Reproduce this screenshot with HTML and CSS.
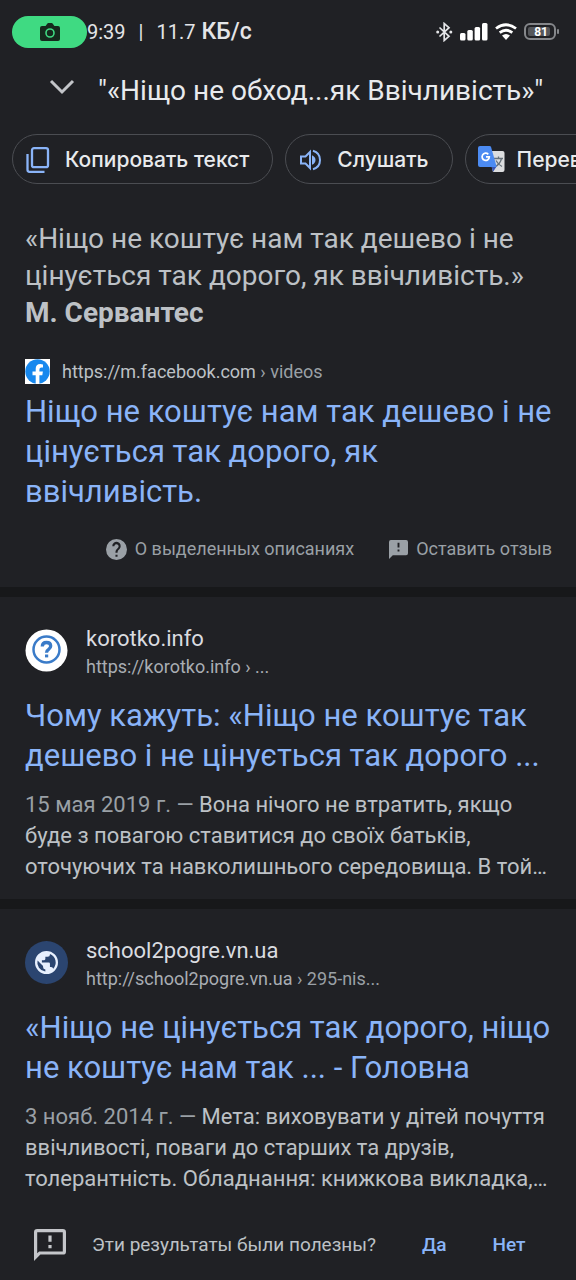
FILE: index.html
```html
<!DOCTYPE html>
<html lang="uk">
<head>
<meta charset="utf-8">
<meta name="viewport" content="width=device-width, initial-scale=1">
<title>Ніщо не обходиться так дешево, як ввічливість</title>
<link rel="stylesheet" href="styles.css">
</head>
<body>
<div class="status">
  <span class="camera-pill">
    <svg width="20" height="18" viewBox="0 0 20 18"><path fill="#16291d" d="M2 3h3.600l1.600-2.300Q7.600 0 8.400 0h3.200q.8 0 1.200.7L14.400 3H18q2 0 2 2v11q0 2-2 2H2q-2 0-2-2V5q0-2 2-2z"/><circle cx="10" cy="10" r="4" fill="none" stroke="#3fda82" stroke-width="1.600"/></svg>
  </span>
  <span class="clock">9:39</span><span class="clock-bar">|</span><span class="clock">11.7</span><span class="unit">КБ/с</span>
  <span class="status-icons">
    <svg width="17" height="20" viewBox="0 0 17 20"><path d="M3.500 5.500l9.500 8.800-4.800 4.200V1.500L13 5.700l-9.500 8.800" fill="none" stroke="#e4e5e8" stroke-width="1.700"/><circle cx="1.700" cy="10" r="1.500" fill="#e4e5e8"/><circle cx="14.800" cy="10" r="1.500" fill="#e4e5e8"/></svg>
    <svg width="28" height="18" viewBox="0 0 28 18" fill="#fff"><rect x="0" y="10" width="5.500" height="7.500" rx="1.500"/><rect x="7.300" y="7" width="5.500" height="10.500" rx="1.500"/><rect x="14.600" y="4" width="5.500" height="13.500" rx="1.500"/><rect x="22" y="0" width="5.500" height="17.500" rx="1.500"/></svg>
    <svg width="22" height="17" viewBox="0 0 22 17" fill="none" stroke="#fff" stroke-width="2.800"><path d="M1 5.500q10-7.600 20 0"/><path d="M4.700 9.600q6.300-4.800 12.600 0"/><path fill="#fff" stroke="none" d="M7 12.600q4-3 8 0L11 17z"/></svg>
    <span class="battery"><span class="battery-level">81</span></span>
  </span>
</div>

<header class="topbar">
  <button class="collapse" aria-label="Згорнути"><svg width="26" height="16" viewBox="0 0 26 16"><path d="M2 2l11 11L24 2" fill="none" stroke="#c3c5c9" stroke-width="3"/></svg></button>
  <h1 class="topbar-title">"«Ніщо не обход...як Ввічливість»"</h1>
</header>

<nav class="chips">
  <button class="chip"><svg width="27" height="26" viewBox="0 0 27 26" fill="none" stroke="#8ab4f8" stroke-width="2.300"><rect x="6" y="1.200" width="16" height="19" rx="2"/><path d="M1.500 7v15.800q0 2 2 2h15"/></svg>Копировать текст</button>
  <button class="chip"><svg width="27" height="22" viewBox="0 0 27 22"><path d="M3 7.500h4.500L12 3v16l-4.500-4.500H3z" fill="none" stroke="#8ab4f8" stroke-width="2"/><path d="M14 6.200q3.500 1.600 3.500 4.800t-3.500 4.800z" fill="#8ab4f8"/><path d="M15 1.800q7 2 7 9.200t-7 9.200" fill="none" stroke="#8ab4f8" stroke-width="2"/></svg>Слушать</button>
  <button class="chip"><svg width="27" height="27" viewBox="0 0 27 27"><path d="M10 5h14.500q2 0 2 2v17q0 2-2 2H15z" fill="#dcdddf"/><path d="M16 12.500h9M20.500 10.500v2M23.500 12.500q-1 5-6.500 8.500M18 14.500q2 4 6 6" fill="none" stroke="#66717a" stroke-width="1.300"/><path d="M13.500 20.500h5L15 26z" fill="#3a57b4"/><path d="M2 0h9.500q1.300 0 1.700 1.400L18.700 21H2q-2 0-2-2V2q0-2 2-2z" fill="#4c8bf2"/><path d="M10.300 8.300A3.600 3.600 0 1 0 11.300 10.900H8" fill="none" stroke="#fff" stroke-width="1.700"/></svg>Перевести</button>
</nav>

<main>
  <section class="featured">
    <p class="quote">«Ніщо не коштує нам так дешево і не цінується так дорого, як ввічливість.» <b class="author">М. Сервантес</b></p>
    <div class="source">
      <svg width="25" height="25" viewBox="0 0 25 25"><path fill="#fff" d="M0 0h25v25H0z"/><circle cx="12.500" cy="12.500" r="12.200" fill="#1788ee"/><path fill="#fff" d="M10.700 25v-8.800H7.500v-3.600h3.200V9.800q0-4.700 4.600-4.700 1.300 0 2.700.3v3h-1.600q-2 0-2 2v2.200h3.500l-.6 3.600h-2.900V25z"/></svg>
      <span class="url">https://m.facebook.com <span class="path">› videos</span></span>
    </div>
    <h2 class="title"><a href="#facebook">Ніщо не коштує нам так дешево і не цінується так дорого, як ввічливість.</a></h2>
    <div class="about">
      <a href="#about"><svg width="21" height="21" viewBox="2 2 20 20" fill="#9aa0a6"><path d="M12 2a10 10 0 1 0 0 20 10 10 0 0 0 0-20zm1 17h-2v-2h2v2zm2.070-7.750-.9.920C13.450 12.900 13 13.500 13 15h-2v-.5c0-1.100.45-2.100 1.170-2.830l1.240-1.260A2 2 0 1 0 10 9H8a4 4 0 1 1 7.070 2.250z"/></svg>О выделенных описаниях</a>
      <a href="#feedback"><svg width="19" height="19" viewBox="2 2 20 20" fill="#9aa0a6"><path d="M20 2H4a2 2 0 0 0-2 2v18l4-4h14a2 2 0 0 0 2-2V4a2 2 0 0 0-2-2zm-7 12h-2v-2h2v2zm0-4h-2V5h2v5z"/></svg>Оставить отзыв</a>
    </div>
  </section>

  <article class="result">
    <div class="site">
      <svg class="site-icon" width="43" height="43" viewBox="0 0 43 43"><circle cx="21.500" cy="21.500" r="21" fill="#fff"/><circle cx="21.500" cy="20.500" r="13" fill="none" stroke="#3a7bc8" stroke-width="2.500"/><path d="M17.300 17.500q0-4 4.200-4t4.200 3.500q0 1.800-2.100 3.300-2.100 1.300-2.100 3.500" fill="none" stroke="#3a7bc8" stroke-width="3.300"/><path fill="#3a7bc8" d="M20 25.500h3.200v2.900H20z"/></svg>
      <div class="site-text"><span class="site-name">korotko.info</span><span class="site-url">https://korotko.info › ...</span></div>
    </div>
    <h2 class="title"><a href="#korotko">Чому кажуть: «Ніщо не коштує так дешево і не цінується так дорого ...</a></h2>
    <p class="snippet"><span class="date">15 мая 2019 г. — </span>Вона нічого не втратить, якщо буде з повагою ставитися до своїх батьків, оточуючих та навколишнього середовища. В той…</p>
  </article>

  <article class="result">
    <div class="site">
      <svg class="site-icon" width="43" height="43" viewBox="0 0 43 43"><circle cx="21.500" cy="21.500" r="21.500" fill="#2b4570"/><path transform="translate(7.700 7.700) scale(1.150)" fill="#e8f0fe" d="M12 2a10 10 0 1 0 0 20 10 10 0 0 0 0-20zm-1 17.930A8 8 0 0 1 4.210 10.210L9 15v1a2 2 0 0 0 2 2v1.930zm6.900-2.540A2 2 0 0 0 16 16h-1v-3a1 1 0 0 0-1-1H8v-2h2a1 1 0 0 0 1-1V7h2a2 2 0 0 0 2-2v-.41a8 8 0 0 1 2.900 12.800z"/></svg>
      <div class="site-text"><span class="site-name">school2pogre.vn.ua</span><span class="site-url">http://school2pogre.vn.ua <span class="path">› 295-nis...</span></span></div>
    </div>
    <h2 class="title"><a href="#school">«Ніщо не цінується так дорого, ніщо не коштує нам так ... - Головна</a></h2>
    <p class="snippet"><span class="date">3 нояб. 2014 г. — </span>Мета: виховувати у дітей почуття ввічливості, поваги до старших та друзів, толерантність. Обладнання: книжкова викладка,…</p>
  </article>
</main>

<footer class="survey">
  <svg width="32" height="32" viewBox="2 2 20 20" fill="#c4c6ca"><path d="M20 2H4a2 2 0 0 0-2 2v18l4-4h14a2 2 0 0 0 2-2V4a2 2 0 0 0-2-2zm0 14H5.200L4 17.200V4h16v12zM11 12h2v2h-2zM11 6h2v4h-2z"/></svg>
  <span class="question">Эти результаты были полезны?</span>
  <button class="answer">Да</button>
  <button class="answer">Нет</button>
</footer>
</body>
</html>
```
FILE: styles.css
```css
* { box-sizing: border-box; }
body {
  margin: 0;
  background: #202125;
  color: #bdc1c6;
  font-family: Roboto, "Noto Sans", sans-serif;
  overflow-x: hidden;
}
svg { display: block; flex: none; }
h1, h2, p { margin: 0; font-weight: 400; }
a { color: inherit; text-decoration: none; }
button { background: none; border: 0; padding: 0; color: inherit; font: inherit; }

.status {
  display: flex;
  align-items: center;
  height: 63px;
  padding: 0 17px 0 12px;
  color: #e4e5e8;
  font: 400 20px/32px Roboto, sans-serif;
}
.camera-pill {
  display: flex;
  align-items: center;
  justify-content: center;
  width: 75px;
  height: 32px;
  border-radius: 16px;
  background: #3fda82;
}
.clock-bar { margin: 0 13px; }
.unit { margin-left: 6px; font-size: 23px; font-weight: 500; }
.status-icons { display: flex; align-items: center; gap: 7px; margin-left: auto; }
.battery {
  position: relative;
  width: 32px;
  height: 17px;
  padding: 2px;
  border: 2px solid #85878b;
  border-radius: 6px;
  margin-right: 3px;
}
.battery::after {
  content: "";
  position: absolute;
  right: -5px;
  top: 4px;
  width: 2px;
  height: 5px;
  border-radius: 1px;
  background: #85878b;
}
.battery-level {
  display: block;
  width: 22px;
  height: 9px;
  border-radius: 2px;
  background: #55575b;
  color: #fff;
  font: 700 12px/10px Roboto, sans-serif;
  text-align: right;
  padding-right: 2px;
}

.topbar { display: flex; align-items: center; gap: 23px; height: 56px; padding-left: 49px; }
.collapse { padding-bottom: 9px; }
.topbar-title { font-size: 28px; line-height: 36px; color: #e8eaed; white-space: nowrap; }

.chips { display: flex; gap: 12px; padding: 15px 0 0 12px; overflow: hidden; }
.chip {
  display: flex;
  flex: none;
  align-items: center;
  gap: 12px;
  height: 50px;
  padding: 1px 23px 0 12px;
  border: 1px solid #4b4d52;
  border-radius: 25px;
  color: #e8eaed;
  font: 500 21px/28px Inter, Roboto, sans-serif;
  white-space: nowrap;
}
.chip:first-child { padding-left: 13px; }

.featured { padding: 36px 24px 26px 25px; }
.quote { font-size: 28px; line-height: 37px; }
.author { display: block; font-weight: 700; }
.source { display: flex; align-items: center; gap: 12px; padding: 28px 0 8px; }
.url { font-size: 18px; line-height: 25px; color: #bdc1c6; }
.path { color: #9aa0a6; }
.title { font-size: 31px; line-height: 40px; color: #8ab4f8; }
.about {
  display: flex;
  justify-content: flex-end;
  gap: 35px;
  padding-top: 25px;
  color: #9aa0a6;
  font-size: 18px;
  line-height: 24px;
}
.about a { display: flex; align-items: center; gap: 8px; }

.result { padding: 27px 24px 17px 25px; border-top: 10px solid #17181a; }
.site { display: flex; align-items: flex-start; gap: 18px; padding-bottom: 15px; }
.site-icon { margin-top: 5px; }
.site-text { display: flex; flex-direction: column; }
.site-name { font-size: 22px; line-height: 29px; color: #dadce0; }
.site-url { font-size: 18px; line-height: 28px; color: #a9adb3; }
.snippet { padding-top: 13px; font-size: 22px; line-height: 31px; }
.date { color: #9aa0a6; }

.survey { display: flex; align-items: center; height: 67px; padding: 0 51px 0 34px; font-size: 19px; }
.question { margin: 0 auto 0 26px; white-space: nowrap; }
.answer { margin-left: 46px; color: #8ab4f8; font-weight: 500; }
```
